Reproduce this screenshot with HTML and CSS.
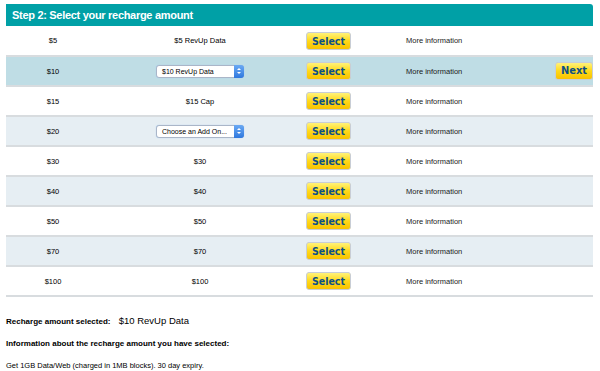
FILE: index.html
```html
<!DOCTYPE html>
<html lang="en">
<head>
    <meta charset="UTF-8">
    <title>Recharge</title>
    <link rel="stylesheet" href="styles.css">
</head>
<body>
    <div class="step">
        <h2 class="step-title">Step 2: Select your recharge amount</h2>
        <table class="amounts">
            <tr><td class="amt">$5</td><td class="desc">$5 RevUp Data</td><td class="act"><button class="btn">Select</button></td><td class="info">More information</td><td class="next"></td></tr>
            <tr class="selected"><td class="amt">$10</td><td class="desc"><div class="pick">$10 RevUp Data<span class="arrows"></span></div></td><td class="act"><button class="btn">Select</button></td><td class="info">More information</td><td class="next"><button class="btn">Next</button></td></tr>
            <tr><td class="amt">$15</td><td class="desc">$15 Cap</td><td class="act"><button class="btn">Select</button></td><td class="info">More information</td><td class="next"></td></tr>
            <tr class="alt"><td class="amt">$20</td><td class="desc"><div class="pick">Choose an Add On...<span class="arrows"></span></div></td><td class="act"><button class="btn">Select</button></td><td class="info">More information</td><td class="next"></td></tr>
            <tr><td class="amt">$30</td><td class="desc">$30</td><td class="act"><button class="btn">Select</button></td><td class="info">More information</td><td class="next"></td></tr>
            <tr class="alt"><td class="amt">$40</td><td class="desc">$40</td><td class="act"><button class="btn">Select</button></td><td class="info">More information</td><td class="next"></td></tr>
            <tr><td class="amt">$50</td><td class="desc">$50</td><td class="act"><button class="btn">Select</button></td><td class="info">More information</td><td class="next"></td></tr>
            <tr class="alt"><td class="amt">$70</td><td class="desc">$70</td><td class="act"><button class="btn">Select</button></td><td class="info">More information</td><td class="next"></td></tr>
            <tr><td class="amt">$100</td><td class="desc">$100</td><td class="act"><button class="btn">Select</button></td><td class="info">More information</td><td class="next"></td></tr>
        </table>
    </div>

    <div class="summary">
        <p class="chosen"><strong>Recharge amount selected:</strong> <span class="chosen-val">$10 RevUp Data</span></p>
        <p class="about"><strong>Information about the recharge amount you have selected:</strong></p>
        <p class="detail">Get 1GB Data/Web (charged in 1MB blocks). 30 day expiry.</p>
    </div>
</body>
</html>
```

FILE: styles.css
```css
* {
    margin: 0;
    padding: 0;
    box-sizing: border-box;
}
body {
    background: #fff;
    padding: 4px 7px 0 6px;
    font-family: "Liberation Sans", Arial, sans-serif;
    font-size: 7.5px;
    color: #000;
}
.step-title {
    background: #00a0a6;
    color: #fff;
    height: 22px;
    padding: 0 6px;
    font-family: "Liberation Sans", Arial, sans-serif;
    font-size: 11px;
    line-height: 22px;
    font-weight: bold;
    letter-spacing: -0.3px;
    border-top-right-radius: 3px;
}
.amounts {
    width: 100%;
    border-collapse: collapse;
}
.amounts td {
    height: 30px;
    border-bottom: 2px solid #d8dcdf;
    vertical-align: middle;
}
.amounts .selected td {
    background: #bfdde5;
}
.amounts .alt td {
    background: #e6eef3;
}
.amt {
    width: 94px;
    text-align: center;
}
.desc {
    width: 200px;
    text-align: center;
}
.act {
    width: 100px;
    padding-left: 6px;
}
.info {
    padding-left: 6px;
    color: #1a1a1a;
}
.next {
    width: 40px;
    text-align: right;
}
.btn {
    display: inline-block;
    height: 18px;
    padding: 0 5px;
    border: 1px solid #c8cdd6;
    border-radius: 3px;
    background: linear-gradient(#fff27a, #ffd91a 50%, #f9c200);
    color: #0e4f86;
    font-family: "DejaVu Sans", sans-serif;
    font-stretch: condensed;
    font-weight: bold;
    font-size: 10.5px;
    line-height: 16px;
    cursor: pointer;
}
.next .btn {
    font-size: 11px;
}
.pick {
    position: relative;
    display: inline-block;
    width: 88px;
    height: 13px;
    padding: 0 14px 0 5px;
    border: 1px solid #aab6c8;
    border-radius: 3px;
    background: #fff;
    text-align: left;
    line-height: 11px;
    font-size: 7px;
    box-shadow: 0 0 1px #9cc3ef;
}
.arrows {
    position: absolute;
    top: -1px;
    right: -1px;
    width: 10px;
    height: 13px;
    border-radius: 0 3px 3px 0;
    background: linear-gradient(#6aa9f3, #2f78de);
}
.arrows::before,
.arrows::after {
    content: "";
    position: absolute;
    left: 3px;
    border-left: 2px solid transparent;
    border-right: 2px solid transparent;
}
.arrows::before {
    top: 3px;
    border-bottom: 2px solid #fff;
}
.arrows::after {
    top: 7px;
    border-top: 2px solid #fff;
}
.summary {
    padding-top: 18px;
}
.chosen {
    font-size: 8px;
    line-height: 12px;
}
.chosen-val {
    font-size: 9.5px;
    margin-left: 6px;
}
.about {
    margin-top: 11px;
    font-size: 8px;
}
.detail {
    margin-top: 13px;
    font-size: 7.5px;
}
```
